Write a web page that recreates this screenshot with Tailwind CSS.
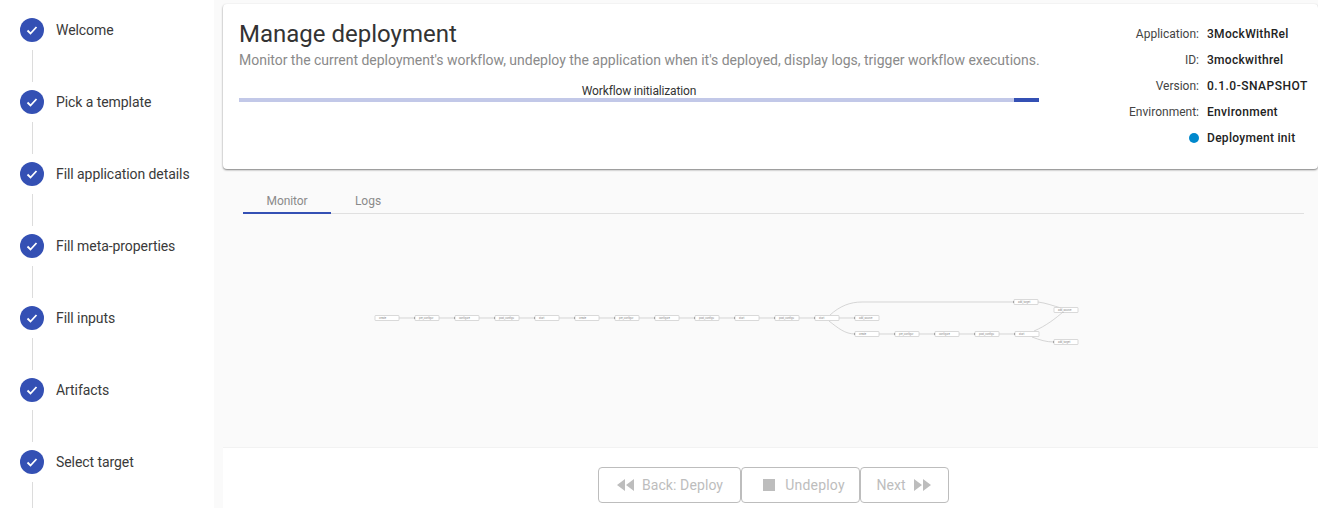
<!DOCTYPE html>
<html lang="en">
<head>
  <meta charset="UTF-8">
  <title>Manage deployment</title>
  <script src="https://cdn.jsdelivr.net/npm/@tailwindcss/browser@4"></script>
</head>
<body class="bg-[#fafafa] font-['Roboto',sans-serif] overflow-hidden h-[508px]">
  <div class="flex h-[508px]">

    <!-- Steps sidebar -->
    <aside class="w-[214px] shrink-0 bg-white pl-5 pt-[18px] overflow-hidden">
      <ol class="flex flex-col text-[14px] text-[#3a3a3a]">
        <li class="h-[72px] relative flex items-start gap-3 tracking-[-0.07px]">
          <span class="w-6 h-6 rounded-full bg-[#3450b4] flex items-center justify-center"><svg class="w-3.5 h-3.5" viewBox="0 0 14 14" fill="none" stroke="white" stroke-width="1.8"><path d="M2.5 7.5l3 3 6-6.5"/></svg></span>
          <span class="leading-6">Welcome</span>
          <span class="absolute left-3 top-8 h-8 w-px bg-[#dcdcdc]"></span>
        </li>
        <li class="h-[72px] relative flex items-start gap-3 tracking-[-0.07px]">
          <span class="w-6 h-6 rounded-full bg-[#3450b4] flex items-center justify-center"><svg class="w-3.5 h-3.5" viewBox="0 0 14 14" fill="none" stroke="white" stroke-width="1.8"><path d="M2.5 7.5l3 3 6-6.5"/></svg></span>
          <span class="leading-6">Pick a template</span>
          <span class="absolute left-3 top-8 h-8 w-px bg-[#dcdcdc]"></span>
        </li>
        <li class="h-[72px] relative flex items-start gap-3 tracking-[-0.07px]">
          <span class="w-6 h-6 rounded-full bg-[#3450b4] flex items-center justify-center"><svg class="w-3.5 h-3.5" viewBox="0 0 14 14" fill="none" stroke="white" stroke-width="1.8"><path d="M2.5 7.5l3 3 6-6.5"/></svg></span>
          <span class="leading-6">Fill application details</span>
          <span class="absolute left-3 top-8 h-8 w-px bg-[#dcdcdc]"></span>
        </li>
        <li class="h-[72px] relative flex items-start gap-3 tracking-[-0.07px]">
          <span class="w-6 h-6 rounded-full bg-[#3450b4] flex items-center justify-center"><svg class="w-3.5 h-3.5" viewBox="0 0 14 14" fill="none" stroke="white" stroke-width="1.8"><path d="M2.5 7.5l3 3 6-6.5"/></svg></span>
          <span class="leading-6">Fill meta-properties</span>
          <span class="absolute left-3 top-8 h-8 w-px bg-[#dcdcdc]"></span>
        </li>
        <li class="h-[72px] relative flex items-start gap-3 tracking-[-0.07px]">
          <span class="w-6 h-6 rounded-full bg-[#3450b4] flex items-center justify-center"><svg class="w-3.5 h-3.5" viewBox="0 0 14 14" fill="none" stroke="white" stroke-width="1.8"><path d="M2.5 7.5l3 3 6-6.5"/></svg></span>
          <span class="leading-6">Fill inputs</span>
          <span class="absolute left-3 top-8 h-8 w-px bg-[#dcdcdc]"></span>
        </li>
        <li class="h-[72px] relative flex items-start gap-3 tracking-[-0.07px]">
          <span class="w-6 h-6 rounded-full bg-[#3450b4] flex items-center justify-center"><svg class="w-3.5 h-3.5" viewBox="0 0 14 14" fill="none" stroke="white" stroke-width="1.8"><path d="M2.5 7.5l3 3 6-6.5"/></svg></span>
          <span class="leading-6">Artifacts</span>
          <span class="absolute left-3 top-8 h-8 w-px bg-[#dcdcdc]"></span>
        </li>
        <li class="h-[72px] relative flex items-start gap-3 tracking-[-0.07px]">
          <span class="w-6 h-6 rounded-full bg-[#3450b4] flex items-center justify-center"><svg class="w-3.5 h-3.5" viewBox="0 0 14 14" fill="none" stroke="white" stroke-width="1.8"><path d="M2.5 7.5l3 3 6-6.5"/></svg></span>
          <span class="leading-6">Select target</span>
          <span class="absolute left-3 top-8 h-8 w-px bg-[#dcdcdc]"></span>
        </li>
      </ol>
    </aside>

    <main class="flex-1 min-w-0 pl-[9px] flex flex-col">
      <!-- Header card -->
      <section class="mt-1 h-[165px] shrink-0 bg-white rounded-[4px] shadow-[0_1px_2px_rgba(0,0,0,0.5)] pl-4 pt-[14px] flex">
        <div class="w-[800px] shrink-0">
          <h1 class="text-[24px] leading-[32px] text-[#333]">Manage deployment</h1>
          <p class="text-[14px] leading-5 text-[#8a8a8a] whitespace-nowrap tracking-[-0.015px]">Monitor the current deployment's workflow, undeploy the application when it's deployed, display logs, trigger workflow executions.</p>
          <p class="text-[12px] leading-4 text-[#333] text-center mt-[13px] tracking-[-0.15px]">Workflow initialization</p>
          <div class="h-1 bg-[#c2c8e8] flex justify-end mt-[-1px]"><div class="w-[25px] bg-[#3450b4]"></div></div>
        </div>
        <dl class="ml-auto w-[279px] shrink-0 grid grid-cols-[160px_1fr] gap-x-2 content-start text-[12px] leading-[26px] mt-[3px]">
          <dt class="text-right text-[#444]">Application:</dt><dd class="font-medium text-[#222] tracking-[0.3px]">3MockWithRel</dd>
          <dt class="text-right text-[#444]">ID:</dt><dd class="font-medium text-[#222] tracking-[0.3px]">3mockwithrel</dd>
          <dt class="text-right text-[#444]">Version:</dt><dd class="font-medium text-[#222] tracking-[0.5px] whitespace-nowrap">0.1.0-SNAPSHOT</dd>
          <dt class="text-right text-[#444]">Environment:</dt><dd class="font-medium text-[#222] tracking-[0.3px]">Environment</dd>
          <dt class="flex justify-end items-center"><span class="w-2.5 h-2.5 rounded-full bg-[#0088cc]"></span></dt><dd class="font-medium text-[#222] tracking-[0.3px]">Deployment init</dd>
        </dl>
      </section>

      <!-- Tabs -->
      <div class="mt-[22px] ml-5 mr-[14px] h-[23px] shrink-0 flex border-b border-[#e0e0e0] text-[12px] text-[#8a8a8a]">
        <div class="w-[88px] h-[23px] text-center leading-[21px] border-b-2 border-[#3450b4] tracking-[-0.1px]">Monitor</div>
        <div class="w-[74px] text-center leading-[21px]">Logs</div>
      </div>

      <!-- Workflow graph -->
      <div class="flex-1 min-h-0 relative">
        <svg class="absolute left-[-223px] top-[-214px] w-[1318px] h-[508px]" viewBox="0 0 1318 508" fill="none" font-family="Roboto, sans-serif">
          <g stroke="#c4c4c4" stroke-width="0.7">
            <path d="M399 318H415M439 318H455M479 318H495M519 318H535M559 318H575M599 318H615M639 318H655M679 318H695M719 318H735M759 318H775M799 318H815M839 318H855"/>
            <path d="M879 334H895M919 334H935M959 334H975M999 334H1015"/>
            <path d="M830 315C840 306 850 302 862 302H1014"/>
            <path d="M829 321C838 328 845 334 855 334"/>
            <path d="M1038 302C1046 303 1054 306 1061 308"/>
            <path d="M1034 331C1046 326 1056 318 1063 312"/>
            <path d="M1032 337C1040 340 1046 342 1054 342"/>
          </g>
          <g fill="#777">
            <circle cx="415" cy="318" r="1"/><circle cx="455" cy="318" r="1"/><circle cx="495" cy="318" r="1"/><circle cx="535" cy="318" r="1"/><circle cx="575" cy="318" r="1"/><circle cx="615" cy="318" r="1"/><circle cx="655" cy="318" r="1"/><circle cx="695" cy="318" r="1"/><circle cx="735" cy="318" r="1"/><circle cx="775" cy="318" r="1"/><circle cx="815" cy="318" r="1"/><circle cx="855" cy="318" r="1"/>
            <circle cx="855" cy="334" r="1"/><circle cx="895" cy="334" r="1"/><circle cx="935" cy="334" r="1"/><circle cx="975" cy="334" r="1"/><circle cx="1015" cy="334" r="1"/>
            <circle cx="1014" cy="302" r="1"/><circle cx="1054" cy="342" r="1"/><circle cx="1063" cy="312" r="1"/>
          </g>
          <g fill="#fff" stroke="#c8c8c8" stroke-width="0.7">
            <rect x="375" y="315.5" width="24" height="5" rx="0.5"/><rect x="415" y="315.5" width="24" height="5" rx="0.5"/><rect x="455" y="315.5" width="24" height="5" rx="0.5"/><rect x="495" y="315.5" width="24" height="5" rx="0.5"/><rect x="535" y="315.5" width="24" height="5" rx="0.5"/><rect x="575" y="315.5" width="24" height="5" rx="0.5"/><rect x="615" y="315.5" width="24" height="5" rx="0.5"/><rect x="655" y="315.5" width="24" height="5" rx="0.5"/><rect x="695" y="315.5" width="24" height="5" rx="0.5"/><rect x="735" y="315.5" width="24" height="5" rx="0.5"/><rect x="775" y="315.5" width="24" height="5" rx="0.5"/><rect x="815" y="315.5" width="24" height="5" rx="0.5"/><rect x="855" y="315.5" width="24" height="5" rx="0.5"/>
            <rect x="855" y="331.5" width="24" height="5" rx="0.5"/><rect x="895" y="331.5" width="24" height="5" rx="0.5"/><rect x="935" y="331.5" width="24" height="5" rx="0.5"/><rect x="975" y="331.5" width="24" height="5" rx="0.5"/><rect x="1015" y="331.5" width="24" height="5" rx="0.5"/>
            <rect x="1014" y="299.5" width="24" height="5" rx="0.5"/><rect x="1054" y="307.5" width="24" height="5" rx="0.5"/><rect x="1054" y="339.5" width="24" height="5" rx="0.5"/>
          </g>
          <g fill="#888" font-size="2.6">
            <text x="379" y="319">create</text><text x="419" y="319">pre_configur</text><text x="459" y="319">configure</text><text x="499" y="319">post_configu</text><text x="539" y="319">start</text><text x="579" y="319">create</text><text x="619" y="319">pre_configur</text><text x="659" y="319">configure</text><text x="699" y="319">post_configu</text><text x="739" y="319">start</text><text x="779" y="319">post_configu</text><text x="819" y="319">start</text><text x="859" y="319">add_source</text>
            <text x="859" y="335">create</text><text x="899" y="335">pre_configur</text><text x="939" y="335">configure</text><text x="979" y="335">post_configu</text><text x="1019" y="335">start</text>
            <text x="1018" y="303">add_target</text><text x="1058" y="311">add_source</text><text x="1058" y="343">add_target</text>
          </g>
        </svg>
      </div>

      <!-- Navigation footer -->
      <footer class="h-[61px] shrink-0 bg-white border-t border-[#f2f2f2] flex justify-center pt-[19px] pl-[6px] text-[14px] text-[#bdbdbd]">
        <button class="h-9 w-[143px] border border-[#bdbdbd] rounded-[4px] flex items-center justify-center gap-[8px] tracking-[0.1px]">
          <svg class="w-[18px] h-3" viewBox="0 0 18 12" fill="#bdbdbd"><path d="M9 0v12L1 6zM18 0v12L10 6z"/></svg>Back: Deploy
        </button>
        <button class="h-9 w-[119px] border border-[#bdbdbd] rounded-[4px] flex items-center justify-center gap-[10px] tracking-[0.2px] pl-[7px]">
          <span class="w-3 h-3 bg-[#bdbdbd]"></span>Undeploy
        </button>
        <button class="h-9 w-[89px] border border-[#bdbdbd] rounded-[4px] flex items-center justify-center gap-[9px]">
          Next<svg class="w-[18px] h-3" viewBox="0 0 18 12" fill="#bdbdbd"><path d="M0 0v12l8-6zM9 0v12l8-6z"/></svg>
        </button>
      </footer>
    </main>
  </div>
</body>
</html>
